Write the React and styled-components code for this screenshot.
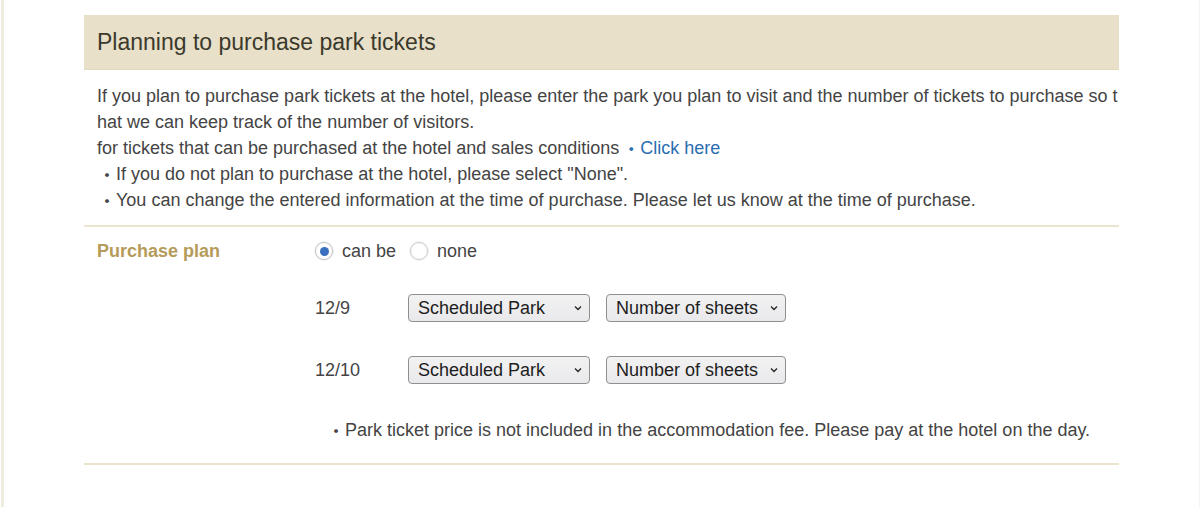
import React, { useState } from "react";
import styled, { createGlobalStyle } from "styled-components";

const GlobalStyle = createGlobalStyle`
  html, body {
    margin: 0;
    padding: 0;
    background: #fff;
  }
  body {
    font-family: "Liberation Sans", Arial, "Noto Sans CJK JP", sans-serif;
    color: #444;
  }
`;

const Page = styled.div`
  min-height: 507px;
  box-sizing: border-box;
  border-left: 3px solid #f1ece1;
  border-right: 1px solid #f6f4ef;
  margin-left: 1px;
  padding: 15px 0 0 80px;
`;

const Panel = styled.section`
  width: 1035px;
`;

const PanelHeader = styled.h2`
  margin: 0;
  height: 55px;
  display: flex;
  align-items: center;
  padding: 0 13px;
  background: #e8e0c9;
  border-bottom: 1px solid #e3dbc0;
  box-sizing: border-box;
  font-size: 23px;
  font-weight: normal;
  color: #3b392c;
`;

const Intro = styled.div`
  padding: 13px 13px 12px;
  font-size: 18px;
  line-height: 26px;
  color: #444;
  border-bottom: 2px solid #ebe4cf;
`;

const Line = styled.div`
  height: 26px;
  white-space: nowrap;
  padding-left: ${(p) => (p.$bullet ? "1px" : "0")};
`;

const Dot = styled.span`
  font-family: "Noto Sans CJK JP", sans-serif;
  display: inline-block;
  width: 18px;
  height: 26px;
  line-height: 26px;
  vertical-align: top;
  text-align: center;
`;

const Link = styled.a`
  color: #2a6db1;
  text-decoration: none;
  margin-left: 3px;
`;

const PlanRow = styled.div`
  display: grid;
  grid-template-columns: 218px 1fr;
  padding: 12px 13px 21px;
  border-bottom: 2px solid #ebe4cf;
`;

const Label = styled.div`
  font-size: 18px;
  font-weight: bold;
  color: #b59b5a;
  line-height: 24px;
`;

const Fields = styled.div`
  display: flex;
  flex-direction: column;
`;

const RadioGroup = styled.div`
  display: flex;
  align-items: center;
  height: 24px;
  font-size: 18px;
  color: #444;
`;

const RadioOption = styled.label`
  display: flex;
  align-items: center;
  gap: 9px;
  margin-right: 14px;
  cursor: pointer;
`;

const RadioCircle = styled.span`
  width: 18px;
  height: 18px;
  border-radius: 50%;
  box-sizing: border-box;
  border: 1px solid ${(p) => (p.$checked ? "#c4c4c4" : "#cdcdcd")};
  background: #fff;
  box-shadow: 0 0 0 1px #f2f2f2;
  display: flex;
  align-items: center;
  justify-content: center;

  &::after {
    content: "";
    width: 9px;
    height: 9px;
    border-radius: 50%;
    background: ${(p) => (p.$checked ? "#3a6fbf" : "transparent")};
  }
`;

const DateRow = styled.div`
  display: grid;
  grid-template-columns: 77px auto auto 1fr;
  align-items: center;
  column-gap: 16px;
  margin-top: ${(p) => (p.$first ? "31px" : "34px")};
  font-size: 18px;
  color: #444;
`;

const SelectWrap = styled.div`
  position: relative;
  width: ${(p) => p.$w}px;
`;

const Select = styled.select`
  appearance: none;
  -webkit-appearance: none;
  display: block;
  width: 100%;
  height: 28px;
  box-sizing: border-box;
  border: 1px solid #8f8f8f;
  border-radius: 4px;
  background: linear-gradient(#f2f2f3, #e9e9eb);
  padding: 0 26px 0 9px;
  font-family: "Liberation Sans", Arial, sans-serif;
  font-size: 18px;
  color: #1d1d1d;
`;

const Chevron = styled.svg`
  position: absolute;
  right: 8px;
  top: 11px;
  width: 8px;
  height: 6px;
  pointer-events: none;
`;

const Note = styled.div`
  margin-top: 34px;
  margin-left: 12px;
  font-size: 18px;
  line-height: 24px;
  height: 24px;
  color: #444;

  ${Dot} {
    height: 24px;
    line-height: 24px;
  }
`;

const DropDown = ({ width, placeholder }) => (
  <SelectWrap $w={width}>
    <Select defaultValue="">
      <option value="">{placeholder}</option>
    </Select>
    <Chevron viewBox="0 0 8 6">
      <path d="M1 1.5 L4 4.5 L7 1.5" fill="none" stroke="#222" strokeWidth="1.3" />
    </Chevron>
  </SelectWrap>
);

const dates = ["12/9", "12/10"];

export default function App() {
  const [plan, setPlan] = useState("yes");
  return (
    <>
      <GlobalStyle />
      <Page>
        <Panel>
          <PanelHeader>Planning to purchase park tickets</PanelHeader>
          <Intro>
            <Line>
              If you plan to purchase park tickets at the hotel, please enter the park you plan to visit and the number of tickets to purchase so t
            </Line>
            <Line>hat we can keep track of the number of visitors.</Line>
            <Line>
              for tickets that can be purchased at the hotel and sales conditions
              <Link href="#">
                <Dot>・</Dot>Click here
              </Link>
            </Line>
            <Line $bullet>
              <Dot>・</Dot>If you do not plan to purchase at the hotel, please select "None".
            </Line>
            <Line $bullet>
              <Dot>・</Dot>You can change the entered information at the time of purchase. Please let us know at the time of purchase.
            </Line>
          </Intro>
          <PlanRow>
            <Label>Purchase plan</Label>
            <Fields>
              <RadioGroup>
                <RadioOption onClick={() => setPlan("yes")}>
                  <RadioCircle $checked={plan === "yes"} />
                  can be
                </RadioOption>
                <RadioOption onClick={() => setPlan("no")}>
                  <RadioCircle $checked={plan === "no"} />
                  none
                </RadioOption>
              </RadioGroup>
              {dates.map((d, i) => (
                <DateRow key={d} $first={i === 0}>
                  <span>{d}</span>
                  <DropDown width={182} placeholder="Scheduled Park" />
                  <DropDown width={180} placeholder="Number of sheets" />
                </DateRow>
              ))}
              <Note>
                <Dot>・</Dot>Park ticket price is not included in the accommodation fee. Please pay at the hotel on the day.
              </Note>
            </Fields>
          </PlanRow>
        </Panel>
      </Page>
    </>
  );
}
